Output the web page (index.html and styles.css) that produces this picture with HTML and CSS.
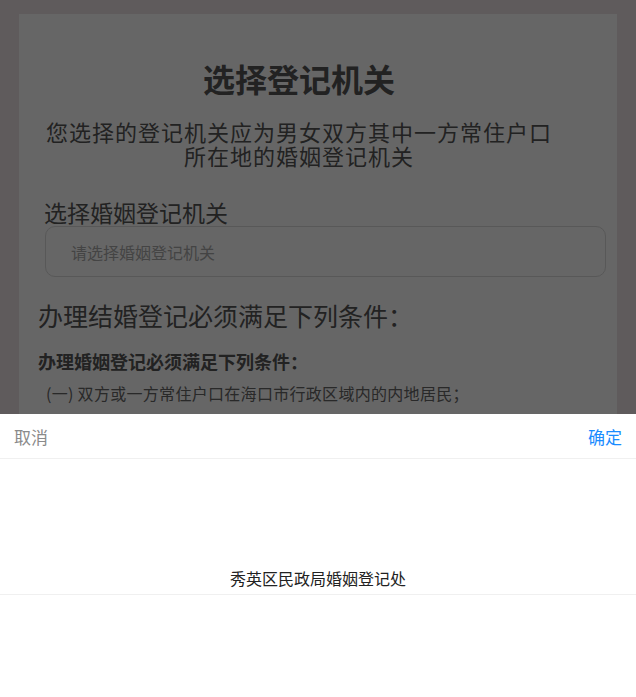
FILE: index.html
```html
<!DOCTYPE html>
<html lang="zh-CN">
<head>
<meta charset="utf-8">
<title>选择登记机关</title>
<link rel="stylesheet" href="styles.css">
</head>
<body>
<div class="page">
  <div class="card">
    <h1 class="title">选择登记机关</h1>
    <p class="subtitle">您选择的登记机关应为男女双方其中一方常住户口<br>所在地的婚姻登记机关</p>
    <div class="label">选择婚姻登记机关</div>
    <div class="input">请选择婚姻登记机关</div>
    <h2 class="section">办理结婚登记必须满足下列条件：</h2>
    <h3 class="sub">办理婚姻登记必须满足下列条件：</h3>
    <p class="item">(一) 双方或一方常住户口在海口市行政区域内的内地居民；</p>
    <p class="item">(二) 双方均无配偶（未婚、离婚、丧偶）；</p>
    <p class="item">(三) 男年满22周岁，女年满20周岁；</p>
  </div>
</div>
<div class="mask"></div>
<div class="sheet">
  <div class="sheet-head">
    <span class="cancel">取消</span>
    <span class="confirm">确定</span>
  </div>
  <div class="picker">
    <div class="option">秀英区民政局婚姻登记处</div>
  </div>
</div>
</body>
</html>
```
FILE: styles.css
```css
* { box-sizing: border-box; }
html, body { margin: 0; padding: 0; }
body {
  background: #ede4e6;
  font-family: "Noto Sans CJK SC", "Noto Sans", sans-serif;
  color: #555;
  overflow: hidden;
  height: 697px;
}
.page {
  padding: 14px 19px 0;
}
.card {
  background: #fff;
  height: 683px;
  overflow: hidden;
  padding: 44px 11px 0 25px;
}
.title {
  margin: 0 52px 0 0;
  font-size: 32px;
  line-height: 40px;
  font-weight: 700;
  text-align: center;
  color: #555;
}
.subtitle {
  margin: 21px 52px 0 0;
  font-size: 22px;
  letter-spacing: 1px;
  line-height: 24px;
  text-align: center;
  color: #555;
}
.label {
  margin-top: 32px;
  font-size: 23px;
  line-height: 27px;
  color: #555;
}
.input {
  margin-left: 1px;
  height: 51px;
  border: 1px solid #dcdcdc;
  border-radius: 10px;
  padding-left: 25px;
  display: flex;
  align-items: center;
  font-size: 16px;
  color: #aaa;
}
.section {
  margin: 23px 0 0 -6px;
  font-size: 25px;
  line-height: 30px;
  font-weight: 400;
  color: #555;
}
.sub {
  margin: 19px 0 0 -6px;
  font-size: 18px;
  line-height: 24px;
  font-weight: 700;
  color: #555;
}
.item {
  margin: 9px 0 0 2px;
  font-size: 16px;
  letter-spacing: 0.3px;
  line-height: 22px;
  color: #666;
}
.mask {
  position: fixed;
  inset: 0;
  background: rgba(0, 0, 0, 0.6);
}
.sheet {
  position: fixed;
  left: 0;
  right: 0;
  bottom: 0;
  height: 283px;
  background: #fff;
  display: flex;
  flex-direction: column;
}
.sheet-head {
  height: 45px;
  border-bottom: 1px solid #f0f0f0;
  display: flex;
  align-items: center;
  justify-content: space-between;
  padding: 0 14px;
  font-size: 17px;
}
.cancel { color: #8a8a8a; }
.confirm { color: #1a8cff; }
.picker {
  flex: 1;
  padding-top: 103px;
}
.option {
  height: 33px;
  line-height: 32px;
  border-bottom: 1px solid #f0f0f0;
  text-align: center;
  font-size: 16px;
  color: #222;
}
```
